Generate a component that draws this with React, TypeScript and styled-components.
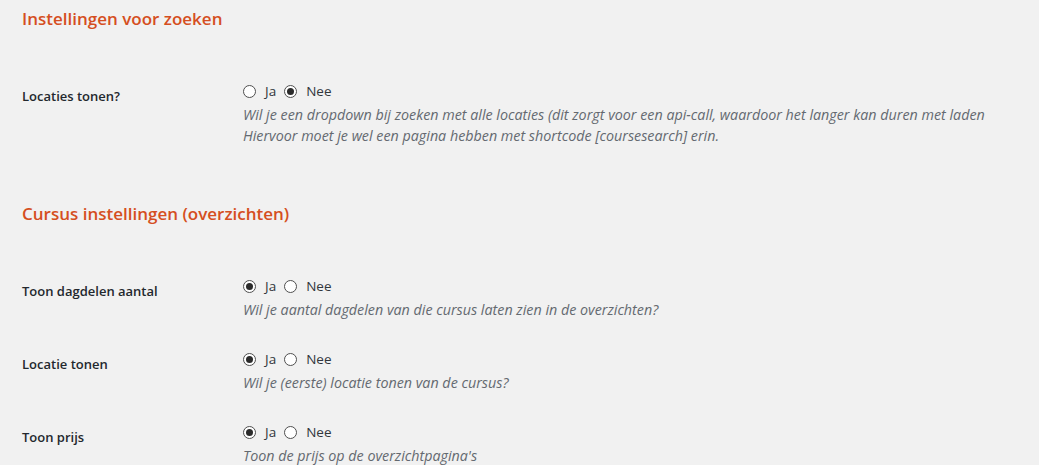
import React from "react";
import styled, { createGlobalStyle } from "styled-components";

const Global = createGlobalStyle`
  html, body { margin: 0; padding: 0; background: #f1f1f1; overflow: hidden; }
  body { font-family: "Open Sans", "Noto Sans", sans-serif; color: #23282d; font-size: 14px; }
`;

const Page = styled.div`
  padding: 0 22px;
`;

const Heading = styled.h2`
  margin: 0;
  height: 36px;
  display: flex;
  align-items: center;
  font-size: 17px;
  font-weight: 600;
  color: #d54e21;
`;

const Section = styled.section`
  & + & { margin-top: 34px; }
`;

const Table = styled.div`
  margin-top: 31px;
  display: flex;
  flex-direction: column;
`;

const Row = styled.div`
  display: flex;
  align-items: flex-start;
`;

const Label = styled.div`
  flex: 0 0 200px;
  padding: 20px 10px 20px 0;
  font-size: 13px;
  font-weight: 600;
  line-height: 18px;
  color: #23282d;
`;

const Field = styled.div`
  flex: 1 1 auto;
  min-width: 0;
  padding: 15px 10px;
`;

const Radios = styled.div`
  display: flex;
  align-items: center;
  height: 18px;
  font-size: 13.5px;
  color: #32373c;
`;

const RadioLabel = styled.label`
  display: flex;
  align-items: center;
  margin-right: 7px;
`;

const Radio = styled.span<{ $checked?: boolean }>`
  width: 13px;
  height: 13px;
  box-sizing: border-box;
  border: 1px solid #4f4f4f;
  border-radius: 50%;
  background: #fff;
  margin: 0 9px 0 1px;
  display: flex;
  align-items: center;
  justify-content: center;
  &::after {
    content: "";
    width: 7px;
    height: 7px;
    border-radius: 50%;
    background: #2b2b2b;
    display: ${(p) => (p.$checked ? "block" : "none")};
  }
`;

const Description = styled.p`
  margin: 4px 0 0 1px;
  font-size: 14.3px;
  line-height: 21px;
  font-style: italic;
  color: #646970;
`;

type Setting = { label: string; yes: boolean; desc: string[] };

const sections: { title: string; rows: Setting[] }[] = [
  {
    title: "Instellingen voor zoeken",
    rows: [
      {
        label: "Locaties tonen?",
        yes: false,
        desc: [
          "Wil je een dropdown bij zoeken met alle locaties (dit zorgt voor een api-call, waardoor het langer kan duren met laden",
          "Hiervoor moet je wel een pagina hebben met shortcode [coursesearch] erin.",
        ],
      },
    ],
  },
  {
    title: "Cursus instellingen (overzichten)",
    rows: [
      {
        label: "Toon dagdelen aantal",
        yes: true,
        desc: ["Wil je aantal dagdelen van die cursus laten zien in de overzichten?"],
      },
      {
        label: "Locatie tonen",
        yes: true,
        desc: ["Wil je (eerste) locatie tonen van de cursus?"],
      },
      {
        label: "Toon prijs",
        yes: true,
        desc: ["Toon de prijs op de overzichtpagina's"],
      },
    ],
  },
];

export default function App() {
  return (
    <Page>
      <Global />
      {sections.map((s) => (
        <Section key={s.title}>
          <Heading>{s.title}</Heading>
          <Table>
            {s.rows.map((r) => (
              <Row key={r.label}>
                <Label>{r.label}</Label>
                <Field>
                  <Radios>
                    <RadioLabel>
                      <Radio $checked={r.yes} />
                      Ja
                    </RadioLabel>
                    <RadioLabel>
                      <Radio $checked={!r.yes} />
                      Nee
                    </RadioLabel>
                  </Radios>
                  <Description>
                    {r.desc.map((d, i) => (
                      <React.Fragment key={i}>
                        {i > 0 && <br />}
                        {d}
                      </React.Fragment>
                    ))}
                  </Description>
                </Field>
              </Row>
            ))}
          </Table>
        </Section>
      ))}
    </Page>
  );
}
